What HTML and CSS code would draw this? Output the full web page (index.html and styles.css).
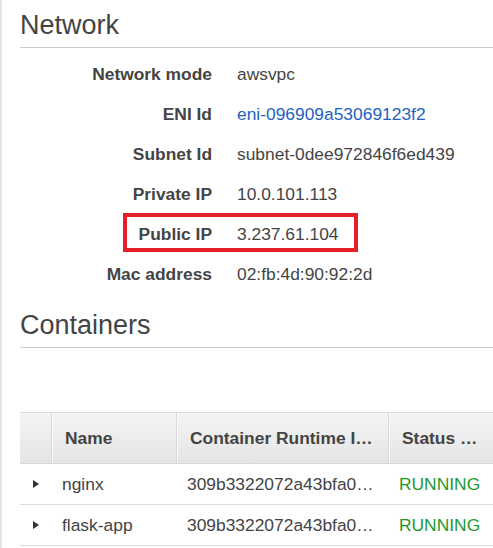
FILE: index.html
```html
<!DOCTYPE html>
<html>
<head>
<meta charset="utf-8">
<link rel="stylesheet" href="styles.css">
</head>
<body>
<div class="page">
  <h2 class="section-title">Network</h2>
  <div class="details">
    <div class="row"><div class="label">Network mode</div><div class="value">awsvpc</div></div>
    <div class="row"><div class="label">ENI Id</div><div class="value link">eni-096909a53069123f2</div></div>
    <div class="row"><div class="label">Subnet Id</div><div class="value">subnet-0dee972846f6ed439</div></div>
    <div class="row"><div class="label">Private IP</div><div class="value">10.0.101.113</div></div>
    <div class="row highlighted"><div class="label">Public IP</div><div class="value">3.237.61.104</div><span class="annotation"></span></div>
    <div class="row"><div class="label">Mac address</div><div class="value">02:fb:4d:90:92:2d</div></div>
  </div>
  <h2 class="section-title">Containers</h2>
  <div class="table">
    <div class="thead">
      <div class="th th-expand"></div>
      <div class="th">Name</div>
      <div class="th">Container Runtime I…</div>
      <div class="th">Status …</div>
    </div>
    <div class="tr">
      <div class="td td-expand"><span class="caret"></span></div>
      <div class="td">nginx</div>
      <div class="td">309b3322072a43bfa0…</div>
      <div class="td status">RUNNING</div>
    </div>
    <div class="tr">
      <div class="td td-expand"><span class="caret"></span></div>
      <div class="td">flask-app</div>
      <div class="td">309b3322072a43bfa0…</div>
      <div class="td status">RUNNING</div>
    </div>
  </div>
</div>
</body>
</html>
```

FILE: styles.css
```css
html, body {
  margin: 0;
  padding: 0;
  background: #fff;
}
body {
  font-family: "Liberation Sans", Arial, sans-serif;
  color: #444;
  overflow: hidden;
  width: 493px;
  height: 548px;
}
.page {
  border-left: 2px solid #e4e4e4;
  padding-left: 18px;
  min-height: 548px;
  box-sizing: border-box;
}
.section-title {
  margin: 0;
  font-size: 27px;
  font-weight: normal;
  line-height: 32px;
  padding-top: 9px;
  padding-bottom: 6px;
  border-bottom: 1px solid #ccc;
  color: #444;
}
.details {
  padding-top: 6px;
  padding-bottom: 6px;
}
.row {
  display: flex;
  height: 40px;
  align-items: center;
  font-size: 17.4px;
  line-height: 20px;
  position: relative;
}
.label {
  width: 192px;
  text-align: right;
  font-weight: bold;
  color: #444;
}
.value {
  margin-left: 25px;
  color: #444;
}
.link {
  color: #1f62c0;
}
.annotation {
  position: absolute;
  left: 103px;
  top: -1px;
  width: 235px;
  height: 39px;
  box-sizing: border-box;
  border: 4px solid #e41f28;
}
.table {
  margin-top: 64px;
  border-top: 1px solid #dcdcdc;
  font-size: 17.4px;
  line-height: 20px;
}
.thead, .tr {
  display: grid;
  grid-template-columns: 32px 125px 212px 1fr;
}
.thead {
  height: 50px;
  background: linear-gradient(#f4f4f4, #e5e5e5);
  border-bottom: 1px solid #d6d6d6;
}
.th {
  display: flex;
  align-items: center;
  padding-left: 12px;
  font-weight: bold;
  color: #444;
  white-space: nowrap;
  overflow: hidden;
  border-left: 1px solid #fafafa;
  box-shadow: -1px 0 0 #d8d8d8;
}
.th-expand {
  border-left: none;
  box-shadow: none;
}
.tr {
  height: 40px;
  border-bottom: 1px solid #dcdcdc;
}
.td {
  display: flex;
  align-items: center;
  padding-left: 10px;
  white-space: nowrap;
  overflow: hidden;
  color: #444;
}
.td-expand {
  padding-left: 13px;
}
.caret {
  width: 0;
  height: 0;
  border-left: 6px solid #333;
  border-top: 4.5px solid transparent;
  border-bottom: 4.5px solid transparent;
}
.status {
  color: #1e9a30;
}
```
